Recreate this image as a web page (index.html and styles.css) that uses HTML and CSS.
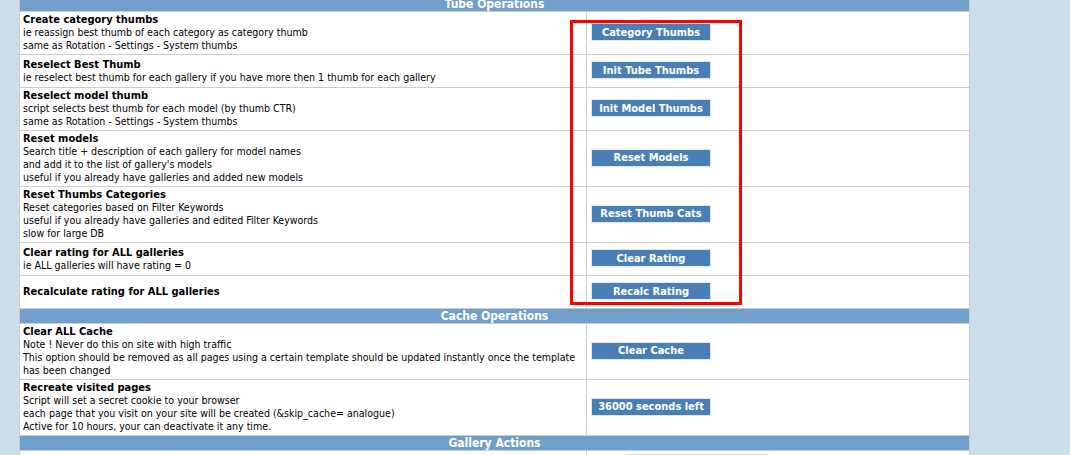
FILE: index.html
```html
<!DOCTYPE html>
<html lang="en">
<head>
    <meta charset="UTF-8">
    <title>Tools</title>
    <link rel="stylesheet" href="styles.css">
</head>
<body>

<div class="content">
    <table class="ops">
        <tr class="section"><td colspan="2">Tube Operations</td></tr>
        <tr>
            <td class="desc"><b>Create category thumbs</b>ie reassign best thumb of each category as category thumb<br>same as Rotation - Settings - System thumbs</td>
            <td class="act"><button class="btn">Category Thumbs</button></td>
        </tr>
        <tr>
            <td class="desc"><b>Reselect Best Thumb</b>ie reselect best thumb for each gallery if you have more then 1 thumb for each gallery</td>
            <td class="act"><button class="btn">Init Tube Thumbs</button></td>
        </tr>
        <tr>
            <td class="desc"><b>Reselect model thumb</b>script selects best thumb for each model (by thumb CTR)<br>same as Rotation - Settings - System thumbs</td>
            <td class="act"><button class="btn">Init Model Thumbs</button></td>
        </tr>
        <tr>
            <td class="desc"><b>Reset models</b>Search title + description of each gallery for model names<br>and add it to the list of gallery's models<br>useful if you already have galleries and added new models</td>
            <td class="act"><button class="btn">Reset Models</button></td>
        </tr>
        <tr>
            <td class="desc"><b>Reset Thumbs Categories</b>Reset categories based on Filter Keywords<br>useful if you already have galleries and edited Filter Keywords<br>slow for large DB</td>
            <td class="act"><button class="btn">Reset Thumb Cats</button></td>
        </tr>
        <tr>
            <td class="desc"><b>Clear rating for ALL galleries</b>ie ALL galleries will have rating = 0</td>
            <td class="act"><button class="btn">Clear Rating</button></td>
        </tr>
        <tr>
            <td class="desc"><b>Recalculate rating for ALL galleries</b></td>
            <td class="act"><button class="btn">Recalc Rating</button></td>
        </tr>

        <tr class="section"><td colspan="2">Cache Operations</td></tr>
        <tr>
            <td class="desc"><b>Clear ALL Cache</b>Note ! Never do this on site with high traffic<br>This option should be removed as all pages using a certain template should be updated instantly once the template has been changed</td>
            <td class="act"><button class="btn">Clear Cache</button></td>
        </tr>
        <tr>
            <td class="desc"><b>Recreate visited pages</b>Script will set a secret cookie to your browser<br>each page that you visit on your site will be created (&amp;skip_cache= analogue)<br>Active for 10 hours, your can deactivate it any time.</td>
            <td class="act"><button class="btn">36000 seconds left</button></td>
        </tr>

        <tr class="section"><td colspan="2">Gallery Actions</td></tr>
        <tr>
            <td class="desc">&nbsp;</td>
            <td class="act"><input class="field" type="text"></td>
        </tr>
    </table>

    <!-- highlight around the action buttons -->
    <div class="mark"></div>
</div>

</body>
</html>
```

FILE: styles.css
```css
body {
    margin: 0;
    background: #cbdde9;
    font-family: "DejaVu Sans Condensed", "DejaVu Sans", sans-serif;
    font-size: 10.55px;
    color: #000;
    overflow: hidden;
}
.content {
    position: relative;
    width: 951px;
    margin: -4px 0 0 19px;
}
.ops {
    width: 951px;
    border-collapse: collapse;
    background: #fff;
    border: 1px solid #c8c8c8;
}
.ops td {
    border: 1px solid #cccccc;
    vertical-align: middle;
    line-height: 13px;
}
.ops b {
    display: block;
    font-size: 11px;
}
.section td {
    background: #6f9fca;
    color: #fff;
    font-weight: bold;
    font-size: 12px;
    text-align: center;
    height: 14px;
    padding: 0;
    line-height: 14px;
}
.desc {
    width: 560px;
    padding: 1px 3px 2px 3px;
}
.act {
    padding: 1px 4px 3px 4px;
}
.btn {
    display: block;
    width: 120px;
    height: 18px;
    margin: 5px 0;
    padding: 0;
    background: #4a7fb5;
    border: 1px solid #dfe6ee;
    color: #fff;
    font-family: inherit;
    font-size: 11px;
    font-weight: bold;
    text-align: center;
    cursor: pointer;
}
.field {
    display: block;
    width: 140px;
    height: 20px;
    margin: 2px 0 6px 36px;
    border: 1px solid #c9d9e6;
    padding: 0;
}
.mark {
    position: absolute;
    left: 551px;
    top: 24px;
    width: 166px;
    height: 279px;
    border: 3px solid #f00;
}
```
